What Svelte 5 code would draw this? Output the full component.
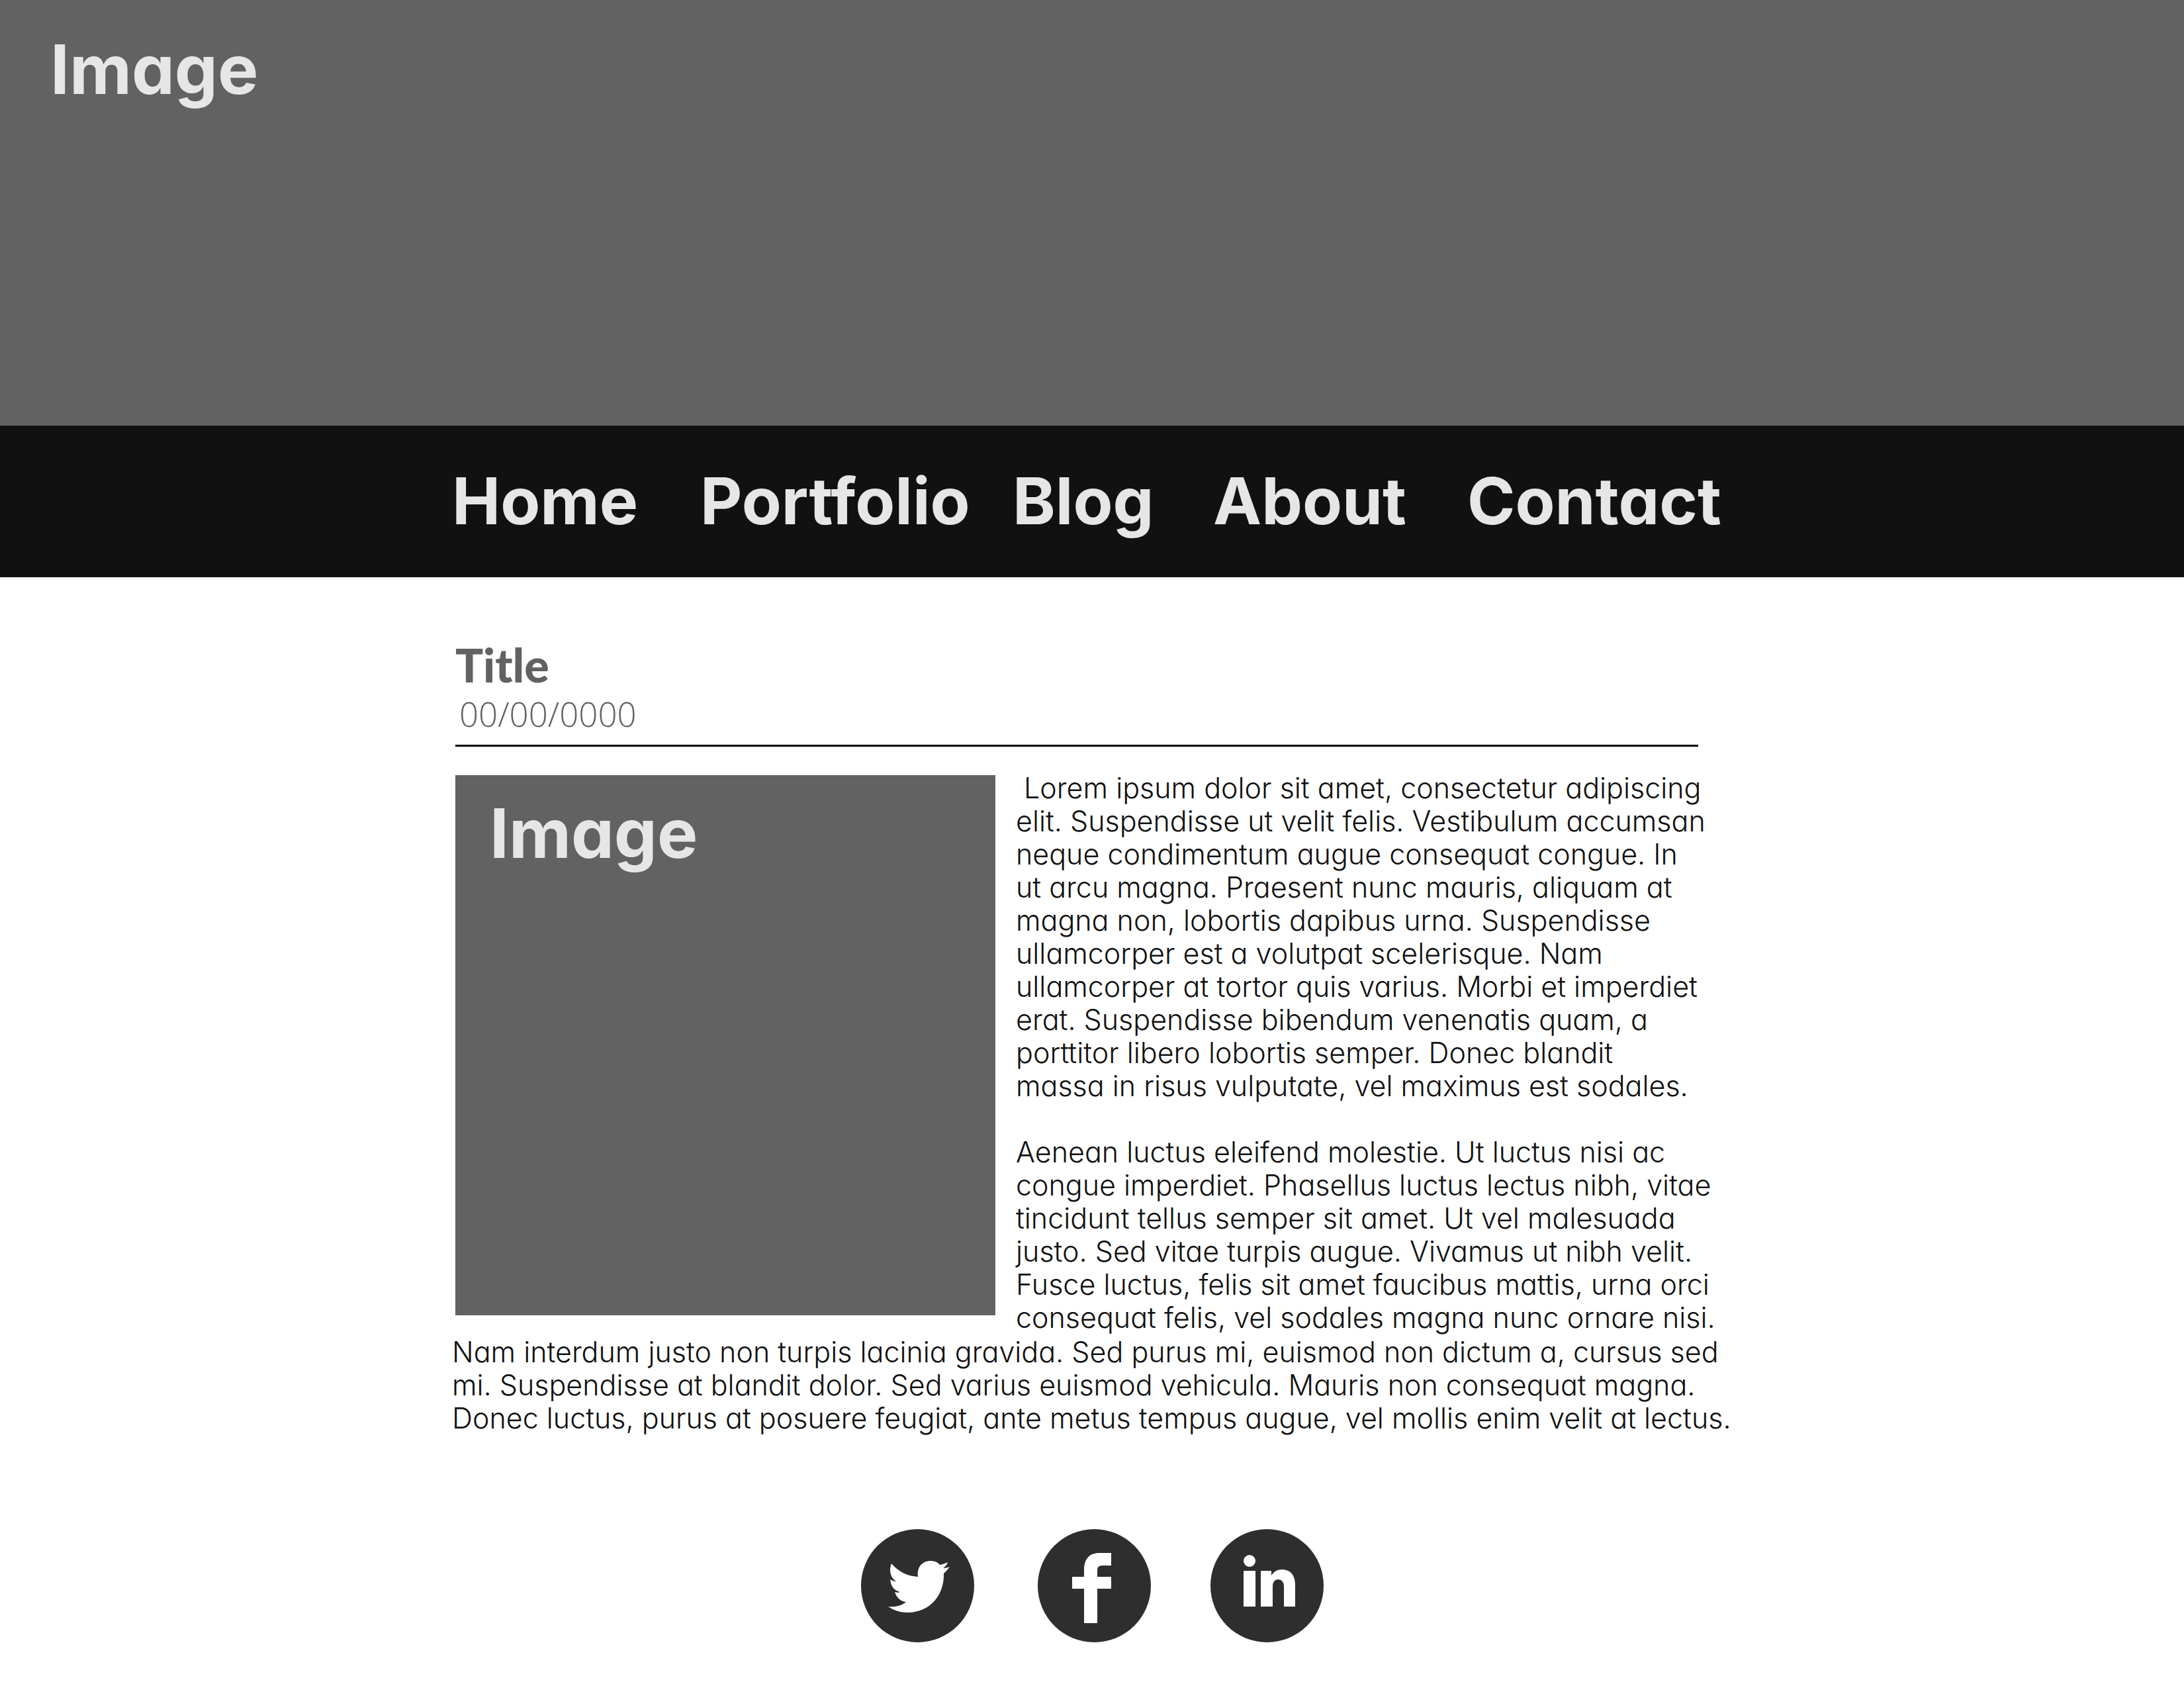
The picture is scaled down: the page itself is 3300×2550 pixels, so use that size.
<script>
  const links = ['Home', 'Portfolio', 'Blog', 'About', 'Contact'];

  const intro = [
    '\u00a0Lorem ipsum dolor sit amet, consectetur adipiscing',
    'elit. Suspendisse ut velit felis. Vestibulum accumsan',
    'neque condimentum augue consequat congue. In',
    'ut arcu magna. Praesent nunc mauris, aliquam at',
    'magna non, lobortis dapibus urna. Suspendisse',
    'ullamcorper est a volutpat scelerisque. Nam',
    'ullamcorper at tortor quis varius. Morbi et imperdiet',
    'erat. Suspendisse bibendum venenatis quam, a',
    'porttitor libero lobortis semper. Donec blandit',
    'massa in risus vulputate, vel maximus est sodales.'
  ];

  const second = [
    'Aenean luctus eleifend molestie. Ut luctus nisi ac',
    'congue imperdiet. Phasellus luctus lectus nibh, vitae',
    'tincidunt tellus semper sit amet. Ut vel malesuada',
    'justo. Sed vitae turpis augue. Vivamus ut nibh velit.',
    'Fusce luctus, felis sit amet faucibus mattis, urna orci',
    'consequat felis, vel sodales magna nunc ornare nisi.'
  ];

  const closing = [
    'Nam interdum justo non turpis lacinia gravida. Sed purus mi, euismod non dictum a, cursus sed',
    'mi. Suspendisse at blandit dolor. Sed varius euismod vehicula. Mauris non consequat magna.',
    'Donec luctus, purus at posuere feugiat, ante metus tempus augue, vel mollis enim velit at lectus.'
  ];
</script>

<header class="hero">
  <span class="label">Image</span>
</header>

<nav class="bar" aria-label="Main">
  <ul class="links">
    {#each links as link}
      <li><a href="#{link.toLowerCase()}">{link}</a></li>
    {/each}
  </ul>
</nav>

<main class="post">
  <h1>Title</h1>
  <time class="date">00/00/0000</time>
  <hr />
  <div class="row">
    <div class="picture"><span class="label">Image</span></div>
    <div class="copy">
      <p>{#each intro as line}<span class="line">{line}</span>{/each}</p>
      <p>{#each second as line}<span class="line">{line}</span>{/each}</p>
    </div>
  </div>
  <p class="closing">{#each closing as line}<span class="line">{line}</span>{/each}</p>
</main>

<footer>
  <ul class="social">
    <li>
      <a href="#twitter" aria-label="Twitter">
        <svg viewBox="0 0 171 171">
          <circle cx="85.5" cy="85.5" r="85.5" fill="#2e2e2e" />
          <path
            fill="#fff"
            d="M46 52C56 64 70 71 86 72C84 58 92 48 105 48C111 48 116 50 119 54C123 53 127 52 131 50C130 54 127 57 124 59C127 59 131 58 134 57C131 61 128 64 125 67C126 99 105 126 70 126C60 126 50 123 41 117C51 118 61 116 68 110C60 109 54 104 51 95C54 96 57 96 59 95C50 93 45 86 44 76C47 78 50 79 53 79C44 73 42 62 46 52Z"
          />
        </svg>
      </a>
    </li>
    <li>
      <a href="#facebook" aria-label="Facebook">
        <svg viewBox="0 0 171 171">
          <circle cx="85.5" cy="85.5" r="85.5" fill="#2e2e2e" />
          <path
            fill="#fff"
            d="M70 142V90H52V72H70V62C70 45 78 36 93 36H111V55H97Q90 55 90 62V72H111V90H90V142Z"
          />
        </svg>
      </a>
    </li>
    <li>
      <a href="#linkedin" aria-label="LinkedIn">
        <svg viewBox="0 0 171 171">
          <circle cx="85.5" cy="85.5" r="85.5" fill="#2e2e2e" />
          <g fill="#fff">
            <circle cx="59" cy="48" r="9" />
            <rect x="50" y="63" width="18" height="54" />
            <path
              d="M76 63H92V70C96 64 101 61 108 61C121 61 128 70 128 84V117H111V88C111 80 108 76 102 76C97 76 94 80 94 87V117H76Z"
            />
          </g>
        </svg>
      </a>
    </li>
  </ul>
</footer>

<style>
  :global(body) {
    background: #fff;
    font-family: 'Century Gothic', Inter, 'Liberation Sans', sans-serif;
    /* single-storey "a" */
    font-feature-settings: 'cv11' 1;
    color: #111;
  }

  ul {
    list-style: none;
    margin: 0;
    padding: 0;
  }

  .hero {
    box-sizing: border-box;
    min-height: 643px;
    padding: 45px 76px;
    background: #626262;
  }

  .label {
    display: block;
    font-size: 103px;
    line-height: 120px;
    font-weight: 700;
    color: #e6e6e6;
  }

  .bar {
    padding: 54px 0 55px;
    background: #111;
  }

  .links {
    display: grid;
    grid-template-columns: 375fr 472fr 303fr 384fr 400fr;
    max-width: 1934px;
    margin: 0 auto;
  }

  .links a {
    font-size: 98px;
    line-height: 120px;
    font-weight: 700;
    color: #e6e6e6;
    text-decoration: none;
    display: block;
  }

  .post {
    max-width: 1924px;
    margin: 0 auto;
    padding-top: 92px;
  }

  h1 {
    margin: 0;
    font-family: 'Century Gothic', Lato, sans-serif;
    font-size: 70px;
    line-height: 80px;
    font-weight: 900;
    color: #626262;
  }

  .date {
    display: block;
    margin: 4px 0 17px 6px;
    font-family: 'Century Gothic', 'Open Sans', sans-serif;
    font-size: 51px;
    line-height: 60px;
    font-weight: 300;
    color: #626262;
  }

  hr {
    width: 1878px;
    max-width: 100%;
    height: 3px;
    margin: 0 0 37px;
    border: 0;
    background: #000;
  }

  .row {
    display: flex;
    gap: 31px;
  }

  .picture {
    box-sizing: border-box;
    flex: 0 0 816px;
    height: 816px;
    margin-top: 6px;
    padding: 28px 52px;
    background: #626262;
  }

  p {
    margin: 0;
    font-size: 43px;
    line-height: 50px;
    font-weight: 300;
  }

  .copy {
    display: flex;
    flex-direction: column;
    gap: 50px;
  }

  .line {
    display: block;
    white-space: nowrap;
  }

  .closing {
    margin: 2px 0 0 -5px;
  }

  footer {
    padding: 143px 0 69px;
  }

  .social {
    display: flex;
    justify-content: center;
    gap: 90px;
  }

  .social li:first-child {
    margin-right: 6px;
  }

  .social a,
  .social svg {
    display: block;
    width: 171px;
    height: 171px;
  }
</style>
